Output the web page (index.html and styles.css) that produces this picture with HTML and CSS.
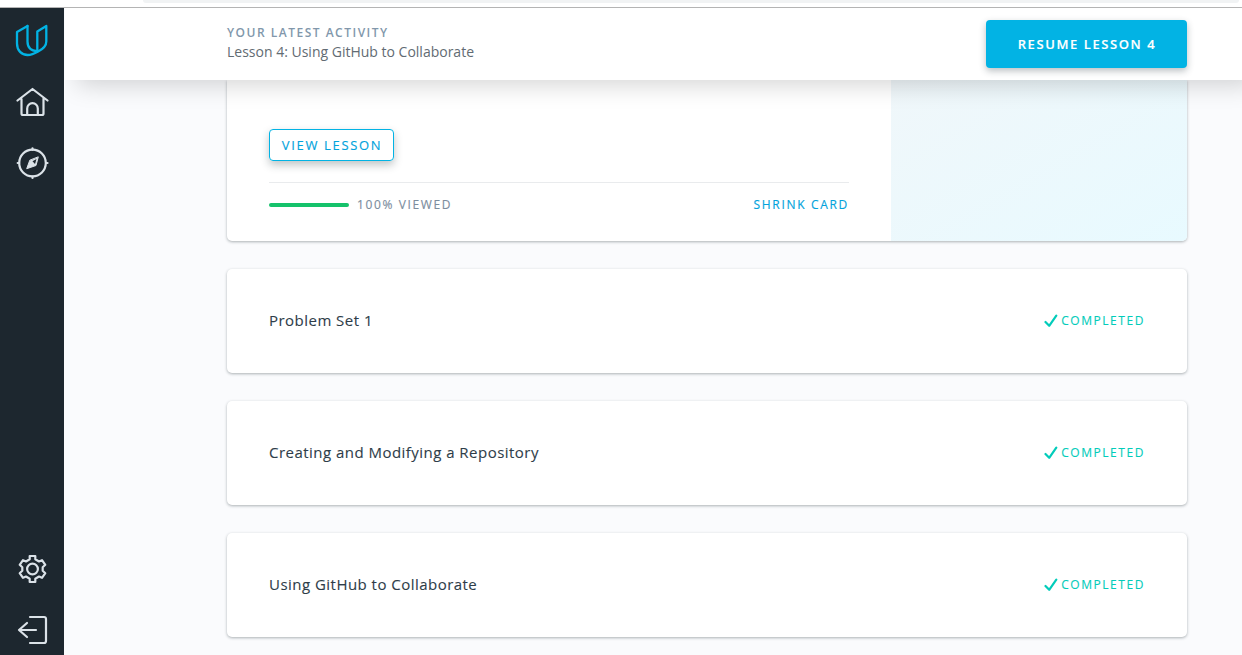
FILE: index.html
```html
<!DOCTYPE html>
<html lang="en">
<head>
<meta charset="utf-8">
<title>Classroom</title>
<link rel="stylesheet" href="styles.css">
</head>
<body>
<div class="browser-edge"><div class="address-bar"></div></div>
<div class="app">
  <nav class="sidebar">
    <a class="nav-logo"><svg width="34" height="34" viewBox="0 0 34 34" fill="none" stroke="#02b3e4" stroke-width="2.300" stroke-linejoin="round" stroke-linecap="round"><path d="M12.500 3 2 9v11.500c0 7 4.600 11.500 10.600 11.500 4 0 7-1.500 10.500-3.500 5-2.500 8.200-5 8.200-10V3L22.300 8.600v19"/><path d="M12.500 3v15.500c0 6 3.500 9.300 9.800 9.600"/></svg></a>
    <a class="nav-home"><svg width="34" height="32" viewBox="0 0 34 32" fill="none" stroke="#dbe2e8" stroke-width="2.200" stroke-linecap="round" stroke-linejoin="round"><path d="M2.500 14.500 17.500 3l15 11.500M6.500 12.500V27.500q0 1.500 1.500 1.500h19q1.500 0 1.500-1.500V12.500M12.200 29v-6.500a5.300 5.300 0 0 1 10.600 0V29"/></svg></a>
    <a class="nav-compass"><svg width="34" height="34" viewBox="0 0 34 34" fill="none" stroke="#dbe2e8" stroke-width="2.200" stroke-linecap="round"><circle cx="17.500" cy="17" r="13.300"/><path d="M17.500 2.300v1.500M17.500 30.500v1.500M2.700 17h1.500M31 17h1.500"/><path d="M23.200 11.200 21 19.500 11.700 22.700l3-8.200z" fill="#dbe2e8" stroke-width="1" stroke-linejoin="round"/><path d="M21.500 13l-1.500 5-2.500-2.700z" fill="#1d272f" stroke="none"/></svg></a>
    <a class="nav-settings"><svg width="32" height="32" viewBox="0 0 32 32" fill="none" stroke="#dbe2e8" stroke-width="2.200" stroke-linejoin="round"><path d="M13.700 3h5.600v3.300l3.700 2.200 3-1.300 3.300 4.600-2.600 2.400v3.600l2.600 2.400-3.300 4.600-3-1.300-3.700 2.200V29h-5.600v-3.300L10 23.500l-3 1.300-3.300-4.600 2.600-2.400v-3.600l-2.600-2.400L7 7.200l3 1.300 3.700-2.200z"/><circle cx="16.500" cy="16" r="5.400"/></svg></a>
    <a class="nav-exit"><svg width="32" height="32" viewBox="0 0 32 32" fill="none" stroke="#dbe2e8" stroke-width="2.200" stroke-linecap="round" stroke-linejoin="round"><path d="M14 3h14q2 0 2 2v22q0 2-2 2H14M20 16H3M11 9l-8 7 8 7"/></svg></a>
  </nav>
  <div class="main">
    <header class="topbar">
      <div class="activity">
        <div class="activity-label">YOUR LATEST ACTIVITY</div>
        <div class="activity-title">Lesson 4: Using GitHub to Collaborate</div>
      </div>
      <a class="resume">RESUME LESSON 4</a>
    </header>
    <main class="lessons">
      <section class="card card-open">
        <div class="card-body">
          <a class="view">VIEW LESSON</a>
          <div class="card-foot">
            <span class="bar"></span>
            <span class="viewed">100% VIEWED</span>
            <a class="shrink">SHRINK CARD</a>
          </div>
        </div>
        <div class="card-art"></div>
      </section>
      <section class="card card-row">
        <h2 class="card-title">Problem Set 1</h2>
        <div class="status"><svg class="check" width="14" height="14" viewBox="0 0 14 14"><path d="M1.500 8 5.200 11.800 12.300 1.600" fill="none" stroke="#02ccba" stroke-width="2.200" stroke-linecap="round" stroke-linejoin="round"/></svg><span class="status-text">COMPLETED</span></div>
      </section>
      <section class="card card-row">
        <h2 class="card-title">Creating and Modifying a Repository</h2>
        <div class="status"><svg class="check" width="14" height="14" viewBox="0 0 14 14"><path d="M1.500 8 5.200 11.800 12.300 1.600" fill="none" stroke="#02ccba" stroke-width="2.200" stroke-linecap="round" stroke-linejoin="round"/></svg><span class="status-text">COMPLETED</span></div>
      </section>
      <section class="card card-row">
        <h2 class="card-title">Using GitHub to Collaborate</h2>
        <div class="status"><svg class="check" width="14" height="14" viewBox="0 0 14 14"><path d="M1.500 8 5.200 11.800 12.300 1.600" fill="none" stroke="#02ccba" stroke-width="2.200" stroke-linecap="round" stroke-linejoin="round"/></svg><span class="status-text">COMPLETED</span></div>
      </section>
    </main>
  </div>
</div>
</body>
</html>
```
FILE: styles.css
```css
* { box-sizing: border-box; }
body {
  margin: 0;
  height: 655px;
  overflow: hidden;
  display: flex;
  flex-direction: column;
  background: #fafbfd;
  font-family: "Open Sans", sans-serif;
}
svg { display: block; }
.browser-edge {
  flex: none;
  height: 8px;
  background: #fff;
  border-bottom: 1px solid #b4b4b4;
  padding: 0 3px 0 143px;
}
.address-bar { height: 3px; background: #f1f3f4; border-radius: 0 0 12px 12px; }
.app { flex: 1; display: flex; min-height: 0; }
.sidebar {
  flex: none;
  width: 64px;
  background: #1d272f;
  display: flex;
  flex-direction: column;
  align-items: center;
  padding: 15px 0 9px;
}
.nav-home { margin-top: 29px; }
.nav-compass { margin-top: 28px; }
.nav-settings { margin-top: auto; }
.nav-exit { margin-top: 29px; }
.main { flex: 1; display: flex; flex-direction: column; min-width: 0; }
.topbar {
  position: relative;
  z-index: 1;
  flex: none;
  height: 72px;
  margin-left: 1px;
  padding: 0 55px 0 162px;
  display: flex;
  align-items: center;
  justify-content: space-between;
  background: #fff;
  box-shadow: 12px 5px 24px rgba(0, 0, 0, .17);
  clip-path: inset(0 0 -50px 0);
}
.activity { padding-bottom: 3px; }
.activity-label {
  font-size: 12px;
  font-weight: 600;
  line-height: 18px;
  letter-spacing: 1.500px;
  color: #8197ab;
}
.activity-title { font-size: 14px; line-height: 20px; color: #626b73; }
.resume {
  width: 201px;
  height: 48px;
  line-height: 48px;
  text-align: center;
  border-radius: 4px;
  background: #02b3e4;
  color: #fff;
  font-size: 13px;
  font-weight: 600;
  -webkit-text-stroke: .15px;
  letter-spacing: 1.580px;
  padding-left: 1px;
  box-shadow: 0 3px 7px rgba(30, 45, 55, .3);
}
.lessons {
  flex: 1;
  display: flex;
  flex-direction: column;
  gap: 28px;
  padding: 0 55px 18px 163px;
}
.card {
  background: #fff;
  border-radius: 5px;
  box-shadow: 0 1px 3px rgba(30, 45, 50, .36);
}
.card-open { display: flex; height: 161px; border-radius: 0 0 5px 5px; }
.card-body { flex: 1; padding: 49px 42px 0; }
.view {
  display: block;
  width: 125px;
  height: 32px;
  line-height: 30px;
  text-align: center;
  border: 1px solid #02b3e4;
  border-radius: 4px;
  color: #02a3dc;
  font-size: 13px;
  -webkit-text-stroke: .15px;
  letter-spacing: 1.650px;
  padding-left: 1px;
  box-shadow: 0 4px 9px rgba(30, 45, 50, .28);
}
.card-foot {
  display: flex;
  align-items: center;
  margin-top: 21px;
  border-top: 1px solid #e9ebed;
  height: 45px;
  font-size: 12px;
  letter-spacing: 1.620px;
  -webkit-text-stroke: .15px;
}
.bar { width: 80px; height: 4px; border-radius: 2px; background: #15c26b; }
.viewed { margin-left: 8px; padding-bottom: 2px; color: #7c8d9e; }
.shrink { margin-left: auto; padding-bottom: 2px; letter-spacing: 1.680px; color: #02a3dc; }
.card-art {
  width: 296px;
  border-radius: 0 0 5px 0;
  background: linear-gradient(150deg, #f0f7fa, #e8faff);
}
.card-row {
  height: 104px;
  padding: 0 42px;
  display: flex;
  align-items: center;
  justify-content: space-between;
}
.card-title {
  margin: 0;
  padding-bottom: 2px;
  font-size: 15px;
  font-weight: 400;
  letter-spacing: .470px;
  -webkit-text-stroke: .1px;
  color: #2e3d49;
}
.status { display: flex; align-items: center; gap: 3px; }
.status-text {
  padding-bottom: 2px;
  font-size: 12px;
  letter-spacing: 1.560px;
  -webkit-text-stroke: .12px;
  color: #02ccba;
}
```
